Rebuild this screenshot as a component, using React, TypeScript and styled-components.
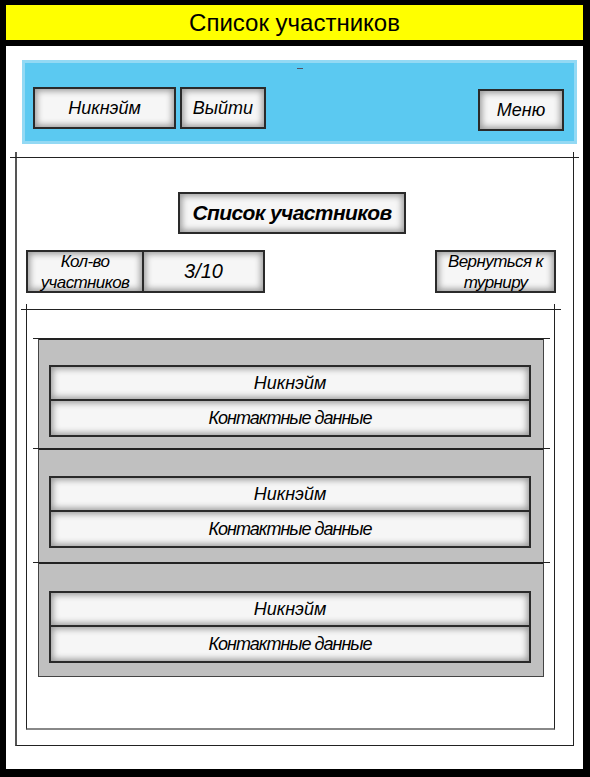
import React from "react";
import styled, { createGlobalStyle, css } from "styled-components";

const GlobalStyle = createGlobalStyle`
  html, body { margin: 0; padding: 0; background: #ffffff; }
  body { font-family: "Liberation Sans", Arial, sans-serif; color: #000; }
  * { box-sizing: border-box; }
`;

const Page = styled.div`
  width: 590px;
  height: 777px;
  border-style: solid;
  border-color: #000;
  border-width: 5px 7px 8px 6px;
  background: #fff;
  display: flex;
  flex-direction: column;
`;

const Header = styled.header`
  height: 41px;
  background: #ffff00;
  border-bottom: 6px solid #000;
  display: flex;
  align-items: center;
  justify-content: center;
  font-size: 24px;
  line-height: 1;
  padding-top: 1px;
`;

const Body = styled.main`
  flex: 1;
  display: flex;
  flex-direction: column;
  padding: 14px 0 0 0;
`;

const NavPanel = styled.nav`
  position: relative;
  margin-left: 16px;
  width: 555px;
  height: 84px;
  background: #5bc9f1;
  border: 3px solid #93d9f4;
  display: flex;
  align-items: flex-start;
  gap: 4px;
  padding: 24px 10px 0 8px;

  &::after {
    content: "";
    position: absolute;
    top: 5px;
    left: 272px;
    width: 6px;
    height: 1px;
    background: #556;
  }
`;

const Spacer = styled.div`
  flex: 1;
`;

const boxLook = css`
  background: #f6f6f6;
  border: 2px solid #2a2a2a;
  box-shadow: inset 0 0 6px 2px rgba(0, 0, 0, 0.38);
  font-style: italic;
  color: #000;
  display: flex;
  align-items: center;
  justify-content: center;
  text-align: center;
`;

const Btn = styled.div<{ $w: number; $h?: number; $dy?: number; $size?: number }>`
  ${boxLook};
  width: ${(p) => p.$w}px;
  height: ${(p) => p.$h ?? 42}px;
  margin-top: ${(p) => p.$dy ?? 0}px;
  font-size: ${(p) => p.$size ?? 18}px;
  flex-shrink: 0;
`;

const TwoLine = styled(Btn)`
  line-height: 21px;
  font-size: 17px;
  letter-spacing: -0.6px;
  padding-top: 1px;
`;

const Frame = styled.section`
  position: relative;
  margin: 13px 0 0 9px;
  width: 559px;
  height: 589px;
  border: 1px solid #222;
  border-left: 2px solid #555;
  display: flex;
  flex-direction: column;

  &::before {
    content: "";
    position: absolute;
    top: -1px;
    left: -7px;
    right: -6px;
    height: 1px;
    background: #222;
  }
  &::after {
    content: "";
    position: absolute;
    top: -6px;
    left: -2px;
    right: -1px;
    height: 5px;
    border-left: 2px solid #555;
    border-right: 1px solid #222;
  }
`;

const TitleBox = styled.h1`
  ${boxLook};
  margin: 34px 0 0 161px;
  width: 228px;
  height: 42px;
  font-size: 21px;
  font-weight: bold;
  letter-spacing: -0.6px;
`;

const InfoRow = styled.div`
  margin-top: 16px;
  padding: 0 17px 0 9px;
  display: flex;
`;

const Joined = styled(Btn)`
  margin-left: -2px;
`;

const ListFrame = styled.section`
  position: relative;
  margin: 16px 0 0 9px;
  width: 529px;
  height: 421px;
  border: 1px solid #222;
  border-bottom: 2px solid #888;
  display: flex;
  flex-direction: column;

  &::before {
    content: "";
    position: absolute;
    top: -1px;
    left: -6px;
    right: -7px;
    height: 1px;
    background: #222;
  }
  &::after {
    content: "";
    position: absolute;
    top: -6px;
    left: -1px;
    right: -1px;
    height: 5px;
    border-left: 1px solid #222;
    border-right: 1px solid #222;
  }
`;

const CardStack = styled.div`
  margin: 28px 0 0 11px;
  width: 506px;
  background: #c0c0c0;
  border: 1px solid #444;
  border-top: none;
  display: flex;
  flex-direction: column;
`;

const Card = styled.article<{ $h: number; $pt: number }>`
  position: relative;
  height: ${(p) => p.$h}px;
  border-top: 2px solid #222;
  padding: ${(p) => p.$pt}px 0 0 10px;
  display: flex;
  flex-direction: column;

  &::before {
    content: "";
    position: absolute;
    top: -2px;
    left: -6px;
    right: -7px;
    height: 1px;
    background: #222;
  }
`;

const Field = styled.div<{ $h: number; $tight?: boolean }>`
  ${boxLook};
  width: 482px;
  height: ${(p) => p.$h}px;
  font-size: 18px;
  letter-spacing: ${(p) => (p.$tight ? "-1px" : "0")};
  & + & {
    margin-top: -2px;
  }
`;

const cards = [
  { h: 110, pt: 25 },
  { h: 114, pt: 26 },
  { h: 114, pt: 27 },
];

export default function App() {
  return (
    <>
      <GlobalStyle />
      <Page>
        <Header>Список участников</Header>
        <Body>
          <NavPanel>
            <Btn $w={143}>Никнэйм</Btn>
            <Btn $w={86}>Выйти</Btn>
            <Spacer />
            <Btn $w={86} $dy={2}>Меню</Btn>
          </NavPanel>
          <Frame>
            <TitleBox>Список участников</TitleBox>
            <InfoRow>
              <TwoLine $w={118} $h={43}>Кол-во участников</TwoLine>
              <Joined $w={123} $h={43} $size={20}>3/10</Joined>
              <Spacer />
              <TwoLine $w={121} $h={43}>Вернуться к турниру</TwoLine>
            </InfoRow>
            <ListFrame>
              <CardStack>
                {cards.map((c, i) => (
                  <Card key={i} $h={c.h} $pt={c.pt}>
                    <Field $h={36}>Никнэйм</Field>
                    <Field $h={38} $tight>Контактные данные</Field>
                  </Card>
                ))}
              </CardStack>
            </ListFrame>
          </Frame>
        </Body>
      </Page>
    </>
  );
}
